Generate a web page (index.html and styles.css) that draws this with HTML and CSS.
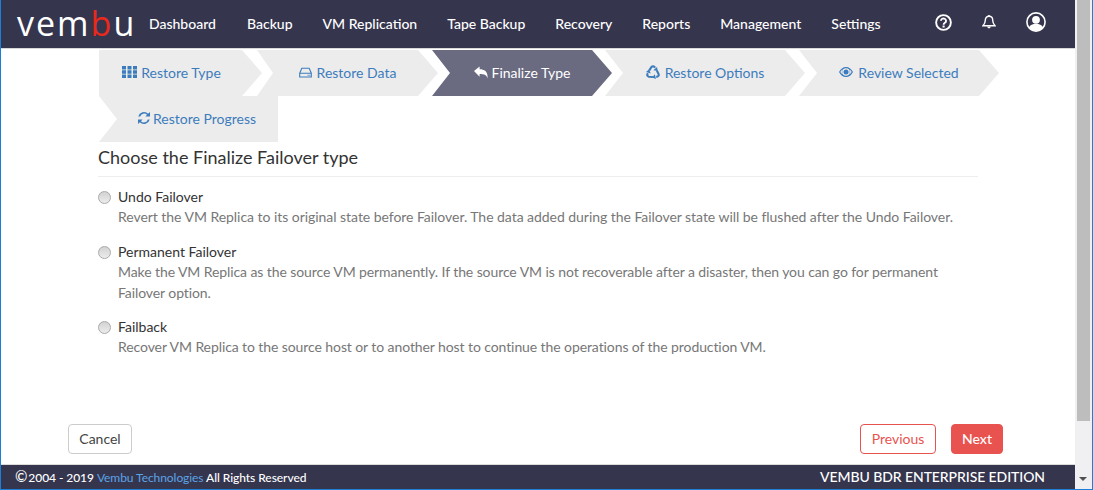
FILE: index.html
```html
<!DOCTYPE html>
<html lang="en">
<head>
<meta charset="utf-8">
<title>Vembu BDR</title>
<link rel="stylesheet" href="styles.css">
</head>
<body>
<div class="window">
  <div class="app">
    <header class="topbar">
      <div class="logo">vem<span class="logo-b">b</span>u</div>
      <nav class="nav">
        <a>Dashboard</a><a>Backup</a><a>VM Replication</a><a>Tape Backup</a><a>Recovery</a><a>Reports</a><a>Management</a><a>Settings</a>
      </nav>
      <div class="top-icons">
        <svg class="ic-help" viewBox="0 0 18 18"><circle cx="9" cy="9" r="7.8" fill="none" stroke="#fff" stroke-width="2"/><path d="M6.300 7.200a2.700 2.500 0 1 1 4.200 2.100c-.9.600-1.400 1-1.400 2" fill="none" stroke="#fff" stroke-width="2"/><rect x="8" y="12.200" width="2.200" height="2.100" fill="#fff"/></svg>
        <svg class="ic-bell" viewBox="0 0 14 14"><path d="M7 1.300c2.500 0 3.700 1.800 3.700 3.900 0 2.900 1 4.100 2.300 5.500H1c1.300-1.400 2.300-2.600 2.300-5.500C3.300 3.100 4.500 1.300 7 1.300z" fill="none" stroke="#fff" stroke-width="1.400"/><path d="M5.200 11.600h3.600a1.800 1.800 0 0 1-3.600 0z" fill="#fff"/><circle cx="7" cy="1" r="1" fill="#fff"/></svg>
        <svg class="ic-user" viewBox="0 0 20 20"><circle cx="10" cy="10" r="9.100" fill="none" stroke="#fff" stroke-width="1.600"/><circle cx="10" cy="7.800" r="3.900" fill="#fff"/><path d="M3 15.600c1-2.700 3.800-3.800 7-3.800s6 1.100 7 3.800A9.200 9.200 0 0 1 3 15.600z" fill="#fff"/></svg>
      </div>
    </header>

    <main class="main">
      <ol class="steps">
        <li class="step step-first">
          <svg class="si" viewBox="0 0 15 12"><path fill="currentColor" d="M0 0h4v3.400H0zM5.500 0h4v3.400h-4zM11 0h4v3.400h-4zM0 4.300h4v3.400H0zM5.500 4.300h4v3.400h-4zM11 4.300h4v3.400h-4zM0 8.600h4V12H0zM5.500 8.600h4V12h-4zM11 8.600h4V12h-4z"/></svg>
          <span>Restore Type</span>
        </li>
        <li class="step step-data">
          <svg class="si si-hdd" viewBox="0 0 13 11"><path fill="none" stroke="currentColor" stroke-width="1.100" d="M.7 6.200 2.800 1.200h7.400l2.100 5V10H.7zM.7 6.200h11.600"/><path fill="currentColor" d="M8.600 7.700h1v1h-1zM10.300 7.700h1v1h-1z"/></svg>
          <span>Restore Data</span>
        </li>
        <li class="step step-active">
          <svg class="si si-reply" viewBox="0 0 15 13"><path fill="currentColor" d="M0 5 6 0v3c4.800 0 9 1.800 8.600 10-1.100-4.300-3.700-5-8.600-5v3z"/></svg>
          <span>Finalize Type</span>
        </li>
        <li class="step step-options">
          <svg class="si si-rec" viewBox="0 0 14 14"><g><path fill="none" stroke="currentColor" stroke-width="2.100" d="M3.300 5.300 5.500 2Q7 .4 8.500 2L9 2.800"/><path fill="currentColor" d="M11.800 5.900 7.400 5.200 11 1.900z"/></g><g transform="rotate(120 7 7.600)"><path fill="none" stroke="currentColor" stroke-width="2.100" d="M3.300 5.300 5.500 2Q7 .4 8.500 2L9 2.800"/><path fill="currentColor" d="M11.800 5.900 7.400 5.200 11 1.900z"/></g><g transform="rotate(240 7 7.600)"><path fill="none" stroke="currentColor" stroke-width="2.100" d="M3.300 5.300 5.500 2Q7 .4 8.500 2L9 2.800"/><path fill="currentColor" d="M11.800 5.900 7.400 5.200 11 1.900z"/></g></svg>
          <span>Restore Options</span>
        </li>
        <li class="step step-review">
          <svg class="si si-eye" viewBox="0 0 14 10"><path fill="currentColor" fill-rule="evenodd" d="M7 0c3 0 5.500 2 7 5-1.500 3-4 5-7 5S1.500 8 0 5c1.500-3 4-5 7-5zM7 1.200A3.800 3.800 0 1 0 7 8.800 3.800 3.800 0 0 0 7 1.200zM1.300 5c.6 1 1.300 1.800 2.200 2.400a4.500 4.500 0 0 1 0-4.800C2.600 3.200 1.900 4 1.300 5zM12.700 5c-.6-1-1.300-1.800-2.200-2.400a4.500 4.500 0 0 1 0 4.800c.9-.6 1.600-1.400 2.200-2.400z"/><circle cx="7" cy="5" r="2.500" fill="currentColor"/></svg>
          <span>Review Selected</span>
        </li>
        <li class="step step-last">
          <svg class="si si-sync" viewBox="0 0 13 13"><path fill="currentColor" d="M11 1.900 13 0v5H8l1.800-1.900A4.300 4.300 0 0 0 2.400 5H.3A6.400 6.400 0 0 1 11 1.900zM2 11.100 0 13V8h5L3.200 9.900A4.300 4.300 0 0 0 10.600 8h2.100A6.400 6.400 0 0 1 2 11.100z"/></svg>
          <span>Restore Progress</span>
        </li>
      </ol>

      <section class="panel">
        <h2 class="title">Choose the Finalize Failover type</h2>
        <div class="options">
          <label class="option">
            <span class="radio"></span>
            <span class="option-text">
              <span class="option-name">Undo Failover</span>
              <span class="option-desc option-desc-wide">Revert the VM Replica to its original state before Failover. The data added during the Failover state will be flushed after the Undo Failover.</span>
            </span>
          </label>
          <label class="option">
            <span class="radio"></span>
            <span class="option-text">
              <span class="option-name">Permanent Failover</span>
              <span class="option-desc">Make the VM Replica as the source VM permanently. If the source VM is not recoverable after a disaster, then you can go for permanent Failover option.</span>
            </span>
          </label>
          <label class="option">
            <span class="radio"></span>
            <span class="option-text">
              <span class="option-name">Failback</span>
              <span class="option-desc">Recover VM Replica to the source host or to another host to continue the operations of the production VM.</span>
            </span>
          </label>
        </div>
      </section>

      <div class="actions">
        <button class="btn btn-cancel">Cancel</button>
        <div class="actions-right">
          <button class="btn btn-prev">Previous</button>
          <button class="btn btn-next">Next</button>
        </div>
      </div>
    </main>

    <footer class="footer">
      <div class="copy"><span class="copy-mark">©</span> 2004 - 2019 <a>Vembu Technologies</a> All Rights Reserved</div>
      <div class="edition">VEMBU BDR ENTERPRISE EDITION</div>
    </footer>
  </div>

  <div class="scrollbar">
    <div class="sb-track"><div class="sb-thumb"></div></div>
    <div class="sb-arrow sb-down"></div>
  </div>
</div>
</body>
</html>
```

FILE: styles.css
```css
* { box-sizing: border-box; }
html, body { margin: 0; padding: 0; height: 100%; overflow: hidden; background: #fff; }
body { font-family: Lato, "Noto Sans", sans-serif; }

.window { display: flex; width: 1093px; height: 490px; border-left: 1px solid #1b80d8; border-right: 1px solid #1b80d8; border-bottom: 1px solid #1b80d8; }
.app { flex: 1; display: flex; flex-direction: column; min-width: 0; }

.topbar { height: 49px; flex: none; display: flex; align-items: center; background: #35354e; color: #fff; border-bottom: 1px solid #d8d8d8; }
.logo { width: 132px; margin-left: 16px; padding-bottom: 3px; font-family: "Open Sans", sans-serif; font-size: 34px; line-height: 40px; font-weight: 400; letter-spacing: 2px; color: #fff; flex: none; }
.logo-b { color: #e8291c; }
.nav { display: flex; gap: 30px; font-size: 14px; font-weight: 500; padding-bottom: 2px; }
.nav a { color: #fff; white-space: nowrap; }
.nav a:nth-child(2) { margin-left: 1px; }
.top-icons { display: flex; align-items: center; margin-left: auto; margin-right: 29px; gap: 30px; margin-top: -4px; }
.ic-help { width: 17px; height: 17px; }
.ic-bell { width: 14px; height: 14px; }
.ic-user { width: 20px; height: 20px; }

.main { flex: 1; display: flex; flex-direction: column; min-height: 0; padding-top: 1px; }

.steps { list-style: none; margin: 0 0 0 98px; padding: 0; display: flex; flex-wrap: wrap; width: 925px; }
.step { flex: none; height: 46px; padding-bottom: 2px; display: flex; align-items: center; justify-content: center; gap: 4px; background: #ececec; color: #3d7cbc; font-size: 14px; white-space: nowrap; clip-path: polygon(0 0, calc(100% - 20px) 0, 100% 50%, calc(100% - 20px) 100%, 0 100%, 18px 50%); }
.step span { display: block; }
.step-first { width: 163px; margin-right: -5px; padding-right: 18px; clip-path: polygon(0 0, calc(100% - 20px) 0, 100% 50%, calc(100% - 20px) 100%, 0 100%); }
.step-data { width: 181px; margin-right: -6px; gap: 5px; clip-path: polygon(0 0, calc(100% - 20px) 0, 100% 50%, calc(100% - 20px) 100%, 0 100%, 16px 50%); }
.step-active { width: 180px; margin-right: -7px; background: #6a6b81; color: #fff; }
.step-options { width: 200px; margin-right: -6px; gap: 5px; }
.step-review { width: 200px; gap: 5px; }
.step-last { width: 179px; padding-left: 17px; gap: 3px; clip-path: polygon(0 0, 100% 0, 100% 100%, 0 100%, 18px 50%); }
.si { width: 15px; height: 12px; flex: none; }
.si-hdd { width: 13px; height: 11px; }
.si-reply { width: 14px; height: 13px; }
.si-rec { width: 14px; height: 14px; }
.si-eye { width: 14px; height: 10px; }
.si-sync { width: 12px; height: 12px; }

.panel { margin: 0 97px 0 97px; }
.title { margin: 0; padding: 4px 0 8px; font-size: 18px; line-height: 22px; font-weight: 400; color: #333; border-bottom: 1px solid #eee; }
.options { display: flex; flex-direction: column; gap: 15.5px; padding-top: 11px; }
.option { display: flex; gap: 7px; }
.radio { flex: none; width: 13px; height: 13px; margin-top: 3px; border-radius: 50%; border: 1px solid #a9a9a9; background: linear-gradient(#d2d2d2, #ececec); }
.option-text { display: block; flex: 1; }
.option-name { display: block; font-size: 14px; line-height: 18px; color: #333; }
.option-desc { display: block; font-size: 14px; line-height: 21px; color: #777; letter-spacing: -.09px; }
.option-desc-wide { letter-spacing: -.043px; }

.actions { margin: auto 72px 10px 67px; display: flex; justify-content: space-between; align-items: center; }
.actions-right { display: flex; gap: 15px; }
.btn { height: 30px; padding: 0 10px 2px; font-family: inherit; font-size: 14px; border-radius: 4px; background: #fff; }
.btn-cancel { width: 64px; border: 1px solid #ccc; color: #444; }
.btn-prev { width: 76px; border: 1px solid #e9534f; color: #e9534f; }
.btn-next { width: 52px; border: 1px solid #e9534f; background: #e9534f; color: #fff; font-weight: 500; }

.footer { height: 25px; flex: none; display: flex; justify-content: space-between; align-items: center; background: #35354e; color: #fff; border-top: 1px solid #dcdcdc; padding: 0 30px 1px 14px; }
.copy { font-size: 12px; font-weight: 500; letter-spacing: -.06px; }
.copy-mark { font-size: 15px; line-height: 14px; margin-right: -2px; }
.copy a { color: #5ba4e6; font-weight: 400; }
.edition { font-size: 14px; font-weight: 500; letter-spacing: -.08px; }

.scrollbar { flex: none; width: 17px; display: flex; flex-direction: column; background: #f0f0f3; }
.sb-arrow { height: 17px; flex: none; position: relative; }
.sb-down::after { content: ""; position: absolute; left: 4px; top: 5px; width: 0; height: 0; border-left: 4px solid transparent; border-right: 4px solid transparent; border-top: 4px solid #505050; }
.sb-track { flex: 1; padding: 0 2px; }
.sb-thumb { height: 421px; background: #bdbdbd; }
```
